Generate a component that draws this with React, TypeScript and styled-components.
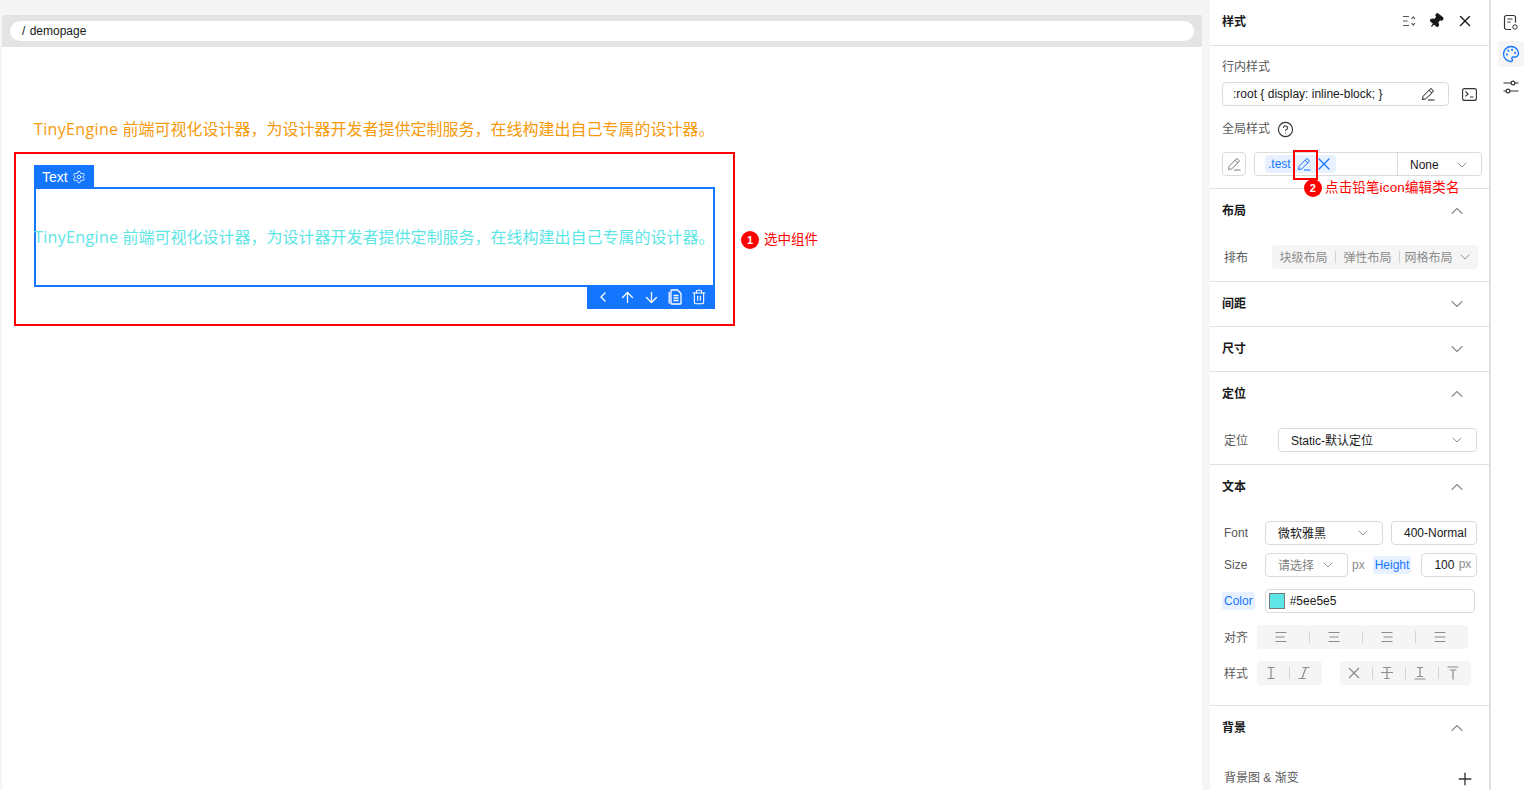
import * as React from "react";
import styled, { createGlobalStyle } from "styled-components";
import { ArrowDown, ArrowUp, ChevronDown, ChevronLeft, ChevronUp, CircleHelp, Palette, Pin, Plus, Settings, Trash2, X } from "lucide-react";

const FONT = `"Liberation Sans", "Noto Sans CJK SC", sans-serif`;
const BLUE = "#1476ff";
const RED = "#ff0000";

const GlobalStyle = createGlobalStyle`
  html, body {
    margin: 0;
    height: 100%;
    overflow: hidden;
    background: #fff;
    font-family: ${FONT};
    font-size: 12px;
    color: #191919;
  }
  #root { height: 100%; }
  * { box-sizing: border-box; }
`;

const Page = styled.div`
  display: flex;
  height: 790px;
  overflow: hidden;
  background: #f5f5f5;
`;

const CanvasColumn = styled.div`
  width: 1200px;
  margin-left: 2px;
  margin-right: 8px;
  padding-top: 15px;
  flex: none;
  display: flex;
  flex-direction: column;
`;

const Breadcrumb = styled.div`
  height: 32px;
  flex: none;
  background: #e4e4e4;
  padding: 6px 8px;
  border-top-left-radius: 3px;
`;

const BreadcrumbPill = styled.div`
  height: 20px;
  line-height: 20px;
  border-radius: 10px;
  background: #fff;
  padding-left: 12px;
  font-size: 12px;
  word-spacing: 1px;
  color: #191919;
`;

const Canvas = styled.div`
  flex: 1;
  background: #fff;
  padding: 70px 0 0 12px;
  position: relative;
`;

const CanvasText = styled.div<{ $color: string }>`
  font-family: "Open Sans", "Noto Sans CJK SC", sans-serif;
  font-size: 16px;
  line-height: 24px;
  color: ${(p) => p.$color};
  white-space: nowrap;
`;

const Latin = styled.span`
  letter-spacing: 0.35px;
`;

const Headline = styled(CanvasText)`
  margin-left: 20px;
`;

const InnerText = styled(CanvasText)`
  margin-left: -2px;
`;

const Frame = styled.div`
  margin-top: 11px;
  width: 721px;
  height: 174px;
  border: 2px solid ${RED};
  padding: 33px 18px 0;
`;

const SelectedBox = styled.div`
  position: relative;
  width: 681px;
  height: 100px;
  border: 2px solid ${BLUE};
  display: flex;
  align-items: center;
`;

const TagLabel = styled.div`
  position: absolute;
  left: -2px;
  top: -24px;
  width: 60px;
  height: 22px;
  background: ${BLUE};
  color: #fff;
  font-size: 14px;
  display: flex;
  align-items: center;
  gap: 4px;
  padding: 1px 0 0 8px;
`;

const ActionBar = styled.div`
  position: absolute;
  right: -2px;
  bottom: -24px;
  width: 128px;
  height: 22px;
  background: ${BLUE};
  color: #fff;
  display: flex;
  align-items: center;
  padding: 0 0 2px 4px;
`;

const ActionSlot = styled.span`
  width: 24px;
  display: flex;
  justify-content: center;
`;

const Callout = styled.div`
  position: absolute;
  display: flex;
  align-items: center;
  gap: 5px;
  color: ${RED};
  font-size: 13.5px;
  line-height: 18px;
  white-space: nowrap;
`;

const CanvasCallout = styled(Callout)`
  left: 739px;
  top: 184px;
`;

const PanelCallout = styled(Callout)`
  left: 94px;
  top: 179px;
  gap: 3px;
  letter-spacing: 0.15px;
`;

const Badge = styled.span`
  width: 18px;
  height: 18px;
  border-radius: 50%;
  background: ${RED};
  color: #fff;
  font-size: 11px;
  font-weight: 700;
  display: flex;
  align-items: center;
  justify-content: center;
`;

const Panel = styled.div`
  width: 281px;
  flex: none;
  background: #fff;
  border-right: 2px solid #e0e0e0;
  position: relative;
`;

const PanelHeader = styled.div`
  height: 46px;
  border-bottom: 1px solid #e0e0e0;
  padding: 0 15px 4px 12px;
  display: flex;
  align-items: center;
  justify-content: space-between;
`;

const Title = styled.div`
  font-size: 12px;
  font-weight: 700;
  color: #191919;
`;

const SectionTitle = styled(Title)`
  margin-bottom: 4px;
`;

const HeaderTools = styled.div`
  display: flex;
  align-items: center;
  gap: 12px;
  color: #191919;
`;

const TiltedPin = styled(Pin)`
  transform: rotate(40deg);
`;

const StyleBlock = styled.div`
  height: 143px;
  border-bottom: 1px solid #e0e0e0;
  padding: 13px 12px 0;
`;

const FieldLabel = styled.div`
  height: 16px;
  line-height: 16px;
  color: #595959;
  display: flex;
  align-items: center;
  gap: 7px;
`;

const InlineRow = styled.div`
  display: flex;
  align-items: center;
  gap: 13px;
  margin: 7px 0 15px;
`;

// Noto CJK sits about a pixel lower than the reference's font in these rows
const Lifted = styled.span`
  display: inline-block;
  margin-bottom: 2px;
`;

const Field = styled.div<{ $w: number; $muted?: boolean; $pl?: number; $pr?: number; $ml?: number }>`
  width: ${(p) => p.$w}px;
  height: 24px;
  flex: none;
  margin-left: ${(p) => p.$ml ?? 0}px;
  border: 1px solid #dbdbdb;
  border-radius: 4px;
  background: #fff;
  padding: 0 ${(p) => p.$pr ?? 11}px 0 ${(p) => p.$pl ?? 12}px;
  display: flex;
  align-items: center;
  justify-content: space-between;
  color: ${(p) => (p.$muted ? "#808080" : "#191919")};
  white-space: nowrap;
`;

const IconBox = styled.div`
  width: 24px;
  height: 24px;
  flex: none;
  border: 1px solid #dbdbdb;
  border-radius: 4px;
  display: flex;
  align-items: center;
  justify-content: center;
  color: #808080;
`;

const ClassRow = styled.div`
  display: flex;
  gap: 8px;
  margin-top: 15px;
`;

const ClassInput = styled.div`
  width: 228px;
  height: 24px;
  flex: none;
  border: 1px solid #dbdbdb;
  border-radius: 4px;
  display: flex;
  align-items: center;
`;

const ClassTags = styled.div`
  width: 143px;
  height: 100%;
  border-right: 1px solid #dbdbdb;
  padding-left: 10px;
  display: flex;
  align-items: center;
`;

const ClassTag = styled.div`
  width: 71px;
  height: 18px;
  border-radius: 4px;
  background: #e8f1ff;
  color: ${BLUE};
  display: flex;
  align-items: center;
  gap: 6px;
  padding-left: 3px;
`;

const TagRemove = styled(X)`
  margin-left: -3px;
`;

const ClassState = styled.div`
  flex: 1;
  padding: 2px 11px 0 12px;
  display: flex;
  align-items: center;
  justify-content: space-between;
  color: #191919;
`;

const PencilMark = styled.div`
  position: absolute;
  left: 83px;
  top: 150px;
  width: 25px;
  height: 30px;
  border: 2px solid ${RED};
`;

const SectionWrap = styled.section`
  border-bottom: 1px solid #e0e0e0;
`;

const SectionHead = styled.div`
  height: 44px;
  padding: 0 22px 0 12px;
  display: flex;
  align-items: center;
  justify-content: space-between;
  color: #8c8c8c;
`;

const SectionBody = styled.div<{ $bottom: number }>`
  padding: 12px 12px ${(p) => p.$bottom}px 14px;
  display: flex;
  flex-direction: column;
  gap: 12px;
`;

const Row = styled.div<{ $gap?: number; $mt?: number; $ml?: number }>`
  display: flex;
  align-items: center;
  gap: ${(p) => p.$gap ?? 8}px;
  height: 24px;
  margin-top: ${(p) => p.$mt ?? 0}px;
  margin-left: ${(p) => p.$ml ?? 0}px;
`;

const SpreadRow = styled(Row)`
  justify-content: space-between;
  padding-right: 2px;
`;

const AddIcon = styled(Plus)`
  margin-top: 4px;
`;

const RowLabel = styled.div<{ $w: number; $cjk?: boolean }>`
  width: ${(p) => p.$w}px;
  flex: none;
  margin-bottom: ${(p) => (p.$cjk ? 2 : 0)}px;
  color: #595959;
  white-space: nowrap;
`;

const Segmented = styled.div<{ $w: number; $ml?: number }>`
  width: ${(p) => p.$w}px;
  height: 24px;
  flex: none;
  margin-left: ${(p) => p.$ml ?? 0}px;
  background: #f5f5f5;
  border-radius: 4px;
  display: flex;
  align-items: center;
  color: #8c8c8c;
`;

const SegItem = styled.span<{ $divided?: boolean; $w?: number }>`
  flex: ${(p) => (p.$w ? `0 0 ${p.$w}px` : "1")};
  height: 12px;
  display: flex;
  align-items: center;
  justify-content: center;
  white-space: nowrap;
  border-left: ${(p) => (p.$divided ? "1px solid #d4d4d4" : "none")};
`;

const Unit = styled.span`
  color: #8c8c8c;
`;

const RaisedUnit = styled(Unit)`
  margin-bottom: 2px;
`;

const Chip = styled.span<{ $ml?: number }>`
  background: #e8f1ff;
  color: ${BLUE};
  height: 18px;
  line-height: 18px;
  padding: 0 2px;
  margin-left: ${(p) => p.$ml ?? 0}px;
  border-radius: 3px;
  flex: none;
`;

const Swatch = styled.span`
  width: 16px;
  height: 16px;
  background: #5ee5e5;
  border: 1px solid #7a7a7a;
  flex: none;
`;

const ColorValue = styled.div`
  width: 210px;
  height: 24px;
  flex: none;
  border: 1px solid #dbdbdb;
  border-radius: 4px;
  padding-left: 3px;
  display: flex;
  align-items: center;
  gap: 5px;
`;

const Rail = styled.div`
  flex: 1;
  background: #fff;
  padding: 9px 0 0 3px;
  display: flex;
  flex-direction: column;
  align-items: center;
  gap: 6px;
`;

const RailButton = styled.div<{ $active?: boolean; $mt?: number }>`
  width: 26px;
  height: 26px;
  margin-top: ${(p) => p.$mt ?? 0}px;
  border-radius: 4px;
  display: flex;
  align-items: center;
  justify-content: center;
  background: ${(p) => (p.$active ? "#f5f5f5" : "transparent")};
  color: ${(p) => (p.$active ? BLUE : "#333")};
`;

const GlyphSvg = styled.svg`
  margin-right: 4px;
`;

const PencilIcon = () => (
  <svg width="14" height="14" viewBox="0 0 14 14" fill="none" stroke="currentColor" strokeWidth="1">
    <path d="M1.5 12.5l.6-3.2 6.8-7a1.5 1.5 0 0 1 2.2 0l.6.6a1.5 1.5 0 0 1 0 2.2l-7 6.8z" />
    <path d="M8 3.2l2.8 2.8M7 13h6.5" />
  </svg>
);

const TerminalIcon = () => (
  <svg width="15" height="13" viewBox="0 0 15 13" fill="none" stroke="#333" strokeWidth="1.1">
    <rect x="0.6" y="0.6" width="13.8" height="11.8" rx="2" />
    <path d="M3.5 3.5l2.6 2.4-2.6 2.4M8 9h3.5" />
  </svg>
);

const FileGearIcon = () => (
  <svg width="16" height="17" viewBox="0 0 16 17" fill="none" stroke="#333" strokeWidth="1.2">
    <path d="M8 15.5H3.5a2 2 0 0 1-2-2v-10a2 2 0 0 1 2-2h7a2 2 0 0 1 2 2v5" />
    <path d="M4.5 5h5M4.5 8h3" />
    <circle cx="12" cy="13" r="2.2" strokeWidth="1" fill="#fff" />
  </svg>
);

const SlidersIcon = () => (
  <svg width="16" height="14" viewBox="0 0 16 14" fill="none" stroke="#333" strokeWidth="1.2">
    <path d="M0.5 3h8M12 3h3.5M0.5 11h3M7 11h8.5" />
    <circle cx="10" cy="3" r="1.9" />
    <circle cx="5" cy="11" r="1.9" />
  </svg>
);

const SortIcon = () => (
  <svg width="14" height="14" viewBox="0 0 14 14" fill="none" stroke="#555" strokeWidth="1.1">
    <path d="M1 2.5h6M1 7h4.5M1 11.5h6M9.5 5L11.3 2.8 13 5M9.5 9l1.8 2.2L13 9" />
  </svg>
);

const CopyIcon = () => (
  <svg width="15" height="16" viewBox="0 0 15 16" fill="none" stroke="#fff" strokeWidth="1.3">
    <path d="M3.5 1h6l3.5 3.5V14.5a.5.5 0 0 1-.5.5h-9a.5.5 0 0 1-.5-.5V1.5a.5.5 0 0 1 .5-.5z" />
    <path d="M1.2 3v11.5" />
    <path d="M5.5 6.5h5M5.5 9h5M5.5 11.5h5" />
  </svg>
);

// small gray glyphs of the text-align and text-style buttons
const Glyph = ({ d }: { d: string }) => (
  <GlyphSvg width="14" height="14" viewBox="0 0 14 14" fill="none" stroke="#8c8c8c" strokeWidth="1.2">
    <path d={d} />
  </GlyphSvg>
);

const GLYPHS = {
  left: "M1.5 2.5h11M1.5 7h9M1.5 11.5h11",
  center: "M1.5 2.5h11M2.5 7h9M1.5 11.5h11",
  right: "M1.5 2.5h11M3.5 7h9M1.5 11.5h11",
  justify: "M1.5 2.5h11M1.5 7h11M1.5 11.5h11",
  bold: "M3.5 1.5h7M7 1.5v11M3.5 12.5h7",
  italic: "M5.5 1.5h7M9 1.5L5 12.5M1.5 12.5h7",
  none: "M2 2l10 10M12 2L2 12",
  strike: "M3 1.5h8M7 1.5v11M1 6.5h12M4.5 12.5h5",
  under: "M4 1.5h6M7 1.5v9M4 10.5h6M1.5 13h11",
  over: "M1.5 1h11M3.5 4h7M7 4v9.5",
};

const Section = ({
  title,
  open,
  bottom = 12,
  children,
}: {
  title: string;
  open?: boolean;
  bottom?: number;
  children?: React.ReactNode;
}) => (
  <SectionWrap>
    <SectionHead>
      <SectionTitle>{title}</SectionTitle>
      {open ? <ChevronUp size={20} strokeWidth={1.3} /> : <ChevronDown size={20} strokeWidth={1.3} />}
    </SectionHead>
    {open && <SectionBody $bottom={bottom}>{children}</SectionBody>}
  </SectionWrap>
);

const Caret = () => <ChevronDown size={16} strokeWidth={1.3} color="#808080" />;

const LINE = " 前端可视化设计器，为设计器开发者提供定制服务，在线构建出自己专属的设计器。";

export default function App() {
  return (
    <>
      <GlobalStyle />
      <Page>
        <CanvasColumn>
          <Breadcrumb>
            <BreadcrumbPill>/ demopage</BreadcrumbPill>
          </Breadcrumb>
          <Canvas>
            <Headline $color="#f59a0c">
              <Latin>TinyEngine</Latin>
              {LINE}
            </Headline>
            <Frame>
              <SelectedBox>
                <TagLabel>
                  Text
                  <Settings size={14} strokeWidth={1.4} />
                </TagLabel>
                <InnerText $color="#5ee5e5">
                  <Latin>TinyEngine</Latin>
                  {LINE}
                </InnerText>
                <ActionBar>
                  <ActionSlot>
                    <ChevronLeft size={16} strokeWidth={2} />
                  </ActionSlot>
                  <ActionSlot>
                    <ArrowUp size={17} strokeWidth={1.8} />
                  </ActionSlot>
                  <ActionSlot>
                    <ArrowDown size={17} strokeWidth={1.8} />
                  </ActionSlot>
                  <ActionSlot>
                    <CopyIcon />
                  </ActionSlot>
                  <ActionSlot>
                    <Trash2 size={16} strokeWidth={1.6} />
                  </ActionSlot>
                </ActionBar>
              </SelectedBox>
            </Frame>
            <CanvasCallout>
              <Badge>1</Badge>
              选中组件
            </CanvasCallout>
          </Canvas>
        </CanvasColumn>

        <Panel>
          <PanelHeader>
            <Title>样式</Title>
            <HeaderTools>
              <SortIcon />
              <TiltedPin size={16} fill="#191919" color="#191919" />
              <X size={18} strokeWidth={1.8} />
            </HeaderTools>
          </PanelHeader>

          <StyleBlock>
            <FieldLabel>行内样式</FieldLabel>
            <InlineRow>
              <Field $w={227} $pl={10} $pr={13}>
                :root {"{"} display: inline-block; {"}"}
                <PencilIcon />
              </Field>
              <TerminalIcon />
            </InlineRow>
            <FieldLabel>
              全局样式
              <CircleHelp size={17} strokeWidth={1.6} color="#333" />
            </FieldLabel>
            <ClassRow>
              <IconBox>
                <PencilIcon />
              </IconBox>
              <ClassInput>
                <ClassTags>
                  <ClassTag>
                    .test
                    <PencilIcon />
                    <TagRemove size={20} strokeWidth={1.5} />
                  </ClassTag>
                </ClassTags>
                <ClassState>
                  None
                  <Caret />
                </ClassState>
              </ClassInput>
            </ClassRow>
          </StyleBlock>

          <Section title="布局" open>
            <Row $gap={0}>
              <RowLabel $w={48} $cjk>
                排布
              </RowLabel>
              <Segmented $w={206}>
                <SegItem $w={63}>
                  <Lifted>块级布局</Lifted>
                </SegItem>
                <SegItem $divided $w={64}>
                  <Lifted>弹性布局</Lifted>
                </SegItem>
                <SegItem $divided $w={58}>
                  <Lifted>网格布局</Lifted>
                </SegItem>
                <Caret />
              </Segmented>
            </Row>
          </Section>
          <Section title="间距" />
          <Section title="尺寸" />
          <Section title="定位" open>
            <Row $gap={0}>
              <RowLabel $w={54} $cjk>
                定位
              </RowLabel>
              <Field $w={199}>
                <Lifted>Static-默认定位</Lifted>
                <Caret />
              </Field>
            </Row>
          </Section>
          <Section title="文本" open bottom={20}>
            <Row $gap={0}>
              <RowLabel $w={41}>Font</RowLabel>
              <Field $w={118}>
                <Lifted>微软雅黑</Lifted>
                <Caret />
              </Field>
              <Field $w={86} $ml={8}>
                400-Normal
              </Field>
            </Row>
            <Row $gap={4} $mt={-4}>
              <RowLabel $w={37}>Size</RowLabel>
              <Field $w={83} $muted>
                <Lifted>请选择</Lifted>
                <Caret />
              </Field>
              <Unit>px</Unit>
              <Chip $ml={4}>Height</Chip>
              <Field $w={56} $ml={6} $pr={5}>
                100
                <RaisedUnit>px</RaisedUnit>
              </Field>
            </Row>
            <Row $gap={10} $ml={-2}>
              <Chip>Color</Chip>
              <ColorValue>
                <Swatch />
                #5ee5e5
              </ColorValue>
            </Row>
            <Row $gap={0}>
              <RowLabel $w={33} $cjk>
                对齐
              </RowLabel>
              <Segmented $w={211}>
                <SegItem>
                  <Glyph d={GLYPHS.left} />
                </SegItem>
                <SegItem $divided>
                  <Glyph d={GLYPHS.center} />
                </SegItem>
                <SegItem $divided>
                  <Glyph d={GLYPHS.right} />
                </SegItem>
                <SegItem $divided>
                  <Glyph d={GLYPHS.justify} />
                </SegItem>
              </Segmented>
            </Row>
            <Row $gap={0}>
              <RowLabel $w={33} $cjk>
                样式
              </RowLabel>
              <Segmented $w={65}>
                <SegItem>
                  <Glyph d={GLYPHS.bold} />
                </SegItem>
                <SegItem $divided>
                  <Glyph d={GLYPHS.italic} />
                </SegItem>
              </Segmented>
              <Segmented $w={131} $ml={18}>
                <SegItem>
                  <Glyph d={GLYPHS.none} />
                </SegItem>
                <SegItem $divided>
                  <Glyph d={GLYPHS.strike} />
                </SegItem>
                <SegItem $divided>
                  <Glyph d={GLYPHS.under} />
                </SegItem>
                <SegItem $divided>
                  <Glyph d={GLYPHS.over} />
                </SegItem>
              </Segmented>
            </Row>
          </Section>
          <Section title="背景" open>
            <SpreadRow $mt={3}>
              <RowLabel $w={90} $cjk>
                背景图 &amp; 渐变
              </RowLabel>
              <AddIcon size={20} strokeWidth={1.6} color="#333" />
            </SpreadRow>
          </Section>

          <PencilMark />
          <PanelCallout>
            <Badge>2</Badge>
            点击铅笔icon编辑类名
          </PanelCallout>
        </Panel>

        <Rail>
          <RailButton>
            <FileGearIcon />
          </RailButton>
          <RailButton $active>
            <Palette size={18} strokeWidth={1.8} />
          </RailButton>
          <RailButton $mt={1}>
            <SlidersIcon />
          </RailButton>
        </Rail>
      </Page>
    </>
  );
}
